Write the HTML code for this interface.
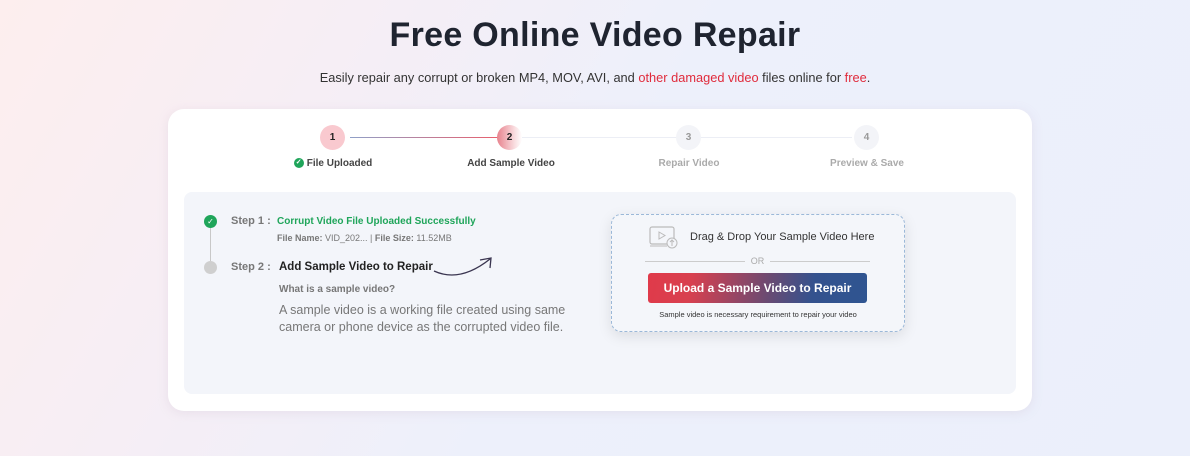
<!DOCTYPE html>
<html><head><style>
*{margin:0;padding:0;box-sizing:border-box}
body{width:1190px;height:456px;overflow:hidden;font-family:"Liberation Sans",sans-serif;background:linear-gradient(120deg,#fdeeee 0%,#f6eef5 25%,#edf0fb 50%,#ebeffb 100%);position:relative;color:#222}
.abs{position:absolute}
h1{position:absolute;left:0;width:1190px;top:16px;text-align:center;font-size:34px;font-weight:bold;color:#1f2430;letter-spacing:0.3px}
.sub{position:absolute;left:0;width:1190px;top:70px;text-align:center;font-size:12.8px;color:#333}
.red{color:#e02b3c}
.card{left:168px;top:109px;width:864px;height:302px;background:#fff;border-radius:16px;box-shadow:0 2px 10px rgba(200,180,200,.25)}
.circ{width:25px;height:25px;border-radius:50%;font-size:10px;font-weight:bold;text-align:center;line-height:25px}
.lbl{font-size:10px;font-weight:bold;text-align:center;width:140px;white-space:nowrap;display:flex;justify-content:center;align-items:center;gap:3px;height:12px}
.panel{left:184px;top:192px;width:832px;height:202px;background:#f3f5fa;border-radius:8px}
.up{left:611px;top:214px;width:294px;height:118px;border:1px dashed #9bb8d8;border-radius:10px;background:#f4f6fa;box-shadow:0 4px 14px rgba(0,0,0,.1)}
</style></head><body>
<h1>Free Online Video Repair</h1>
<div class="sub">Easily repair any corrupt or broken MP4, MOV, AVI, and <span class="red">other damaged video</span> files online for <span class="red">free</span>.</div>
<div class="abs card"></div>
<div class="abs" style="left:350px;top:137px;width:148px;height:1px;background:linear-gradient(90deg,#8fa0c8,#e8606e)"></div>
<div class="abs" style="left:522px;top:137px;width:330px;height:1px;background:#eceef5"></div>
<div class="abs circ" style="left:320px;top:125px;background:#f9c9cf;color:#222">1</div>
<div class="abs circ" style="left:497px;top:125px;background:linear-gradient(90deg,#e7828d,#f9dde0 70%,#fff);color:#222">2</div>
<div class="abs circ" style="left:676px;top:125px;background:#f3f4f8;color:#999">3</div>
<div class="abs circ" style="left:854px;top:125px;background:#f3f4f8;color:#999">4</div>
<div class="abs lbl" style="left:263px;top:157px;color:#444"><span style="display:block;width:10px;height:10px;border-radius:50%;background:#1fa55a;color:#fff;font-size:7px;line-height:10px;text-align:center">✓</span><span>File Uploaded</span></div>
<div class="abs lbl" style="left:441px;top:157px;color:#444">Add Sample Video</div>
<div class="abs lbl" style="left:619px;top:157px;color:#aaa">Repair Video</div>
<div class="abs lbl" style="left:797px;top:157px;color:#aaa">Preview &amp; Save</div>
<div class="abs panel"></div>
<div class="abs" style="left:210px;top:222px;width:1px;height:44px;background:#c8c8c8"></div>
<div class="abs" style="left:204px;top:215px;width:13px;height:13px;border-radius:50%;background:#1fa55a;color:#fff;font-size:8px;text-align:center;line-height:13px">✓</div>
<div class="abs" style="left:204px;top:261px;width:13px;height:13px;border-radius:50%;background:#cfcfcf"></div>
<div class="abs" style="left:231px;top:215px;font-size:11px;font-weight:bold;color:#777">Step 1 :</div>
<div class="abs" style="left:277px;top:216px;font-size:10px;font-weight:bold;color:#1fa55a">Corrupt Video File Uploaded Successfully</div>
<div class="abs" style="left:277px;top:233px;font-size:9px;color:#777"><b>File Name:</b> VID_202... | <b>File Size:</b> 11.52MB</div>
<div class="abs" style="left:231px;top:261px;font-size:11px;font-weight:bold;color:#777">Step 2 :</div>
<div class="abs" style="left:279px;top:261px;font-size:11.5px;font-weight:bold;color:#222">Add Sample Video to Repair</div>
<svg class="abs" style="left:432px;top:255px" width="64" height="24"><path d="M2 16 Q28 28 58 4 M48 5 L59 3 L58 13" fill="none" stroke="#3a3550" stroke-width="1.3"/></svg>
<div class="abs" style="left:279px;top:284px;font-size:10px;font-weight:bold;color:#777">What is a sample video?</div>
<div class="abs" style="left:279px;top:302px;font-size:12.5px;color:#777;line-height:17px;width:300px">A sample video is a working file created using same camera or phone device as the corrupted video file.</div>
<div class="abs up"></div>
<svg class="abs" style="left:649px;top:226px" width="30" height="24"><rect x="1" y="1" width="24" height="17" rx="2" fill="none" stroke="#bbb" stroke-width="1.2"/><path d="M10 6 L16 9.5 L10 13 Z" fill="none" stroke="#bbb"/><line x1="1" y1="20" x2="18" y2="20" stroke="#bbb"/><circle cx="23" cy="17" r="5" fill="#f4f6fa" stroke="#bbb"/><path d="M23 20 V14 M21 16 L23 14 L25 16" stroke="#bbb" fill="none"/></svg>
<div class="abs" style="left:690px;top:231px;font-size:11px;color:#333">Drag &amp; Drop Your Sample Video Here</div>
<div class="abs" style="left:645px;top:261px;width:100px;height:1px;background:#ccc"></div>
<div class="abs" style="left:770px;top:261px;width:100px;height:1px;background:#ccc"></div>
<div class="abs" style="left:745px;top:256px;width:25px;text-align:center;font-size:9px;color:#aaa">OR</div>
<div class="abs" style="left:648px;top:273px;width:219px;height:30px;border-radius:3px;background:linear-gradient(100deg,#e03a4a 0%,#d8404f 20%,#6a4a72 55%,#34528e 75%,#2f5591 100%);color:#fff;font-size:12px;font-weight:bold;text-align:center;line-height:30px">Upload a Sample Video to Repair</div>
<div class="abs" style="left:611px;top:310px;width:294px;text-align:center;font-size:7.5px;color:#333">Sample video is necessary requirement to repair your video</div>
</body></html>
